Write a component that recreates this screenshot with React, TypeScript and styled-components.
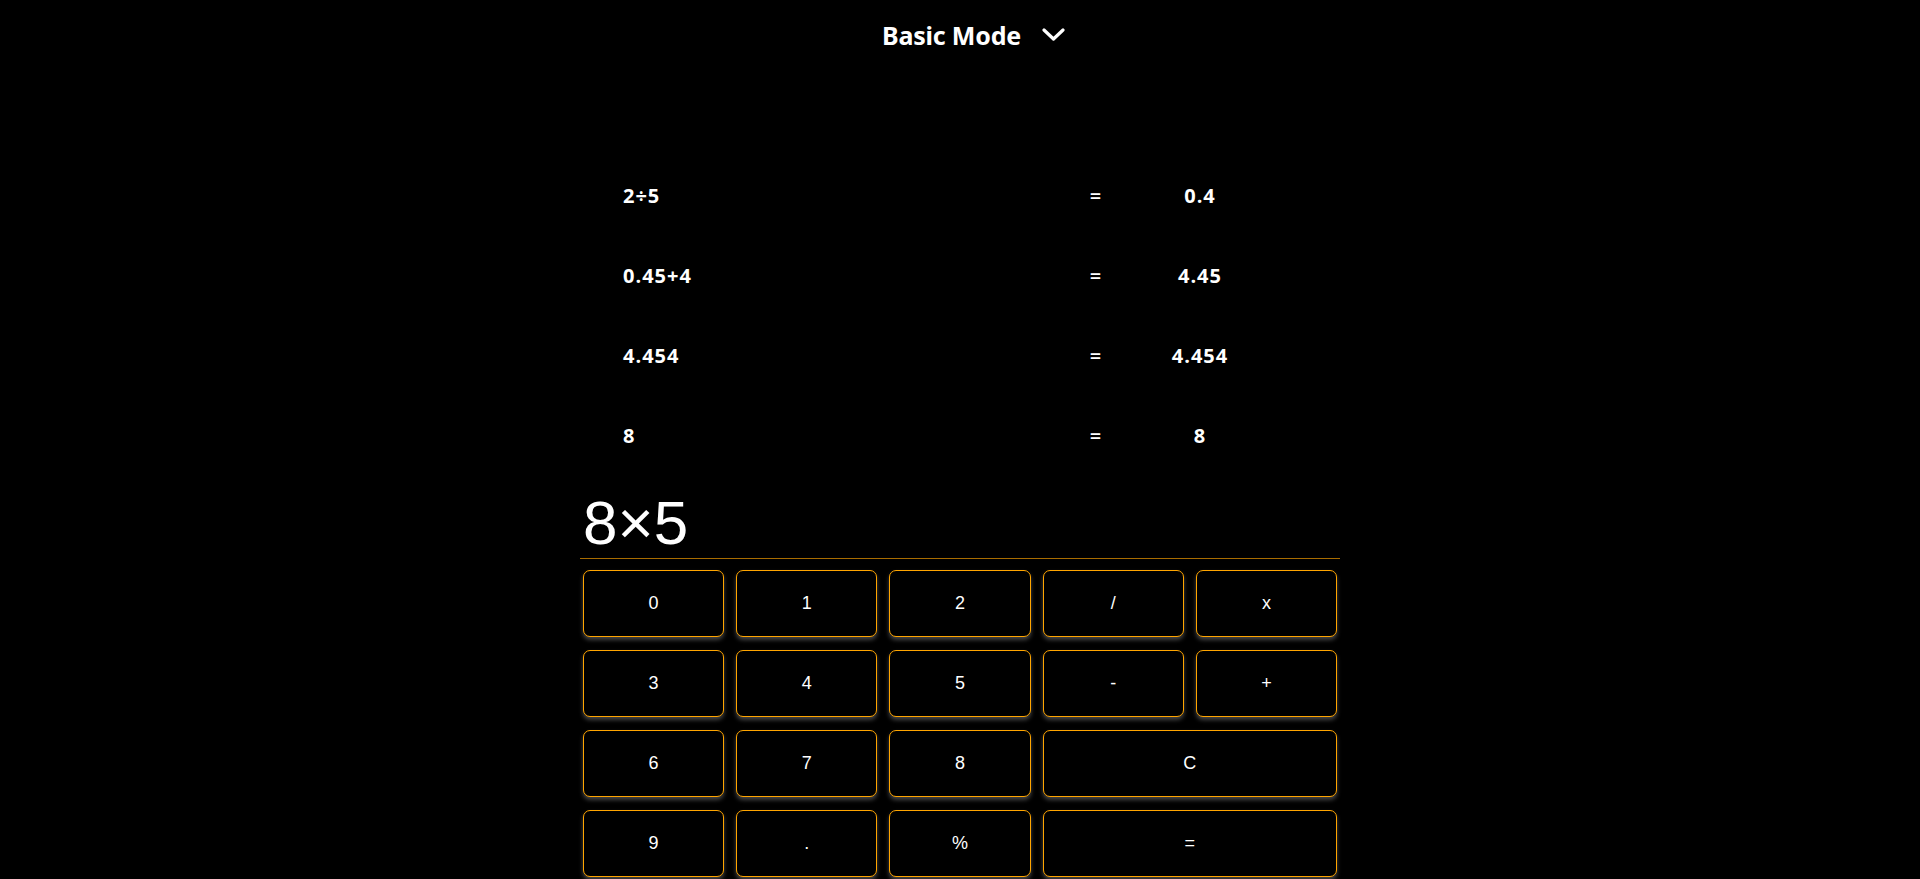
import React from "react";
import styled, { createGlobalStyle } from "styled-components";

const GlobalStyle = createGlobalStyle`
  html, body {
    margin: 0;
    padding: 0;
    background: #000;
    color: #fff;
  }
  body {
    font-family: "Liberation Sans", Arial, sans-serif;
  }
`;

const Page = styled.div`
  min-height: 879px;
  background: #000;
  display: flex;
  flex-direction: column;
  align-items: center;
`;

const Header = styled.header`
  height: 70px;
  width: 100%;
  display: flex;
  align-items: center;
  justify-content: center;
  gap: 21px;
  padding-left: 27px;
  box-sizing: border-box;
`;

const ModeTitle = styled.h1`
  margin: 0;
  font-family: "Noto Sans", sans-serif;
  font-weight: 700;
  font-size: 25px;
  letter-spacing: -0.2px;
  color: #fff;
`;

const Chevron = styled.svg`
  width: 23px;
  height: 14px;
  display: block;
`;

const Calculator = styled.main`
  width: 760px;
  margin-top: 85px;
  display: flex;
  flex-direction: column;
`;

const History = styled.div`
  display: flex;
  flex-direction: column;
`;

const HistoryRow = styled.div`
  height: 80px;
  display: grid;
  grid-template-columns: 1fr 68px 140px;
  align-items: center;
  padding: 0 70px 0 43px;
  font-family: "Open Sans", sans-serif;
  font-weight: 700;
  font-size: 20px;
  letter-spacing: 1px;
`;

const Expr = styled.span`
  text-align: left;
`;

const Eq = styled.span`
  text-align: center;
  font-weight: 600;
`;

const Result = styled.span`
  text-align: center;
`;

const Display = styled.div`
  height: 83px;
  display: flex;
  align-items: flex-end;
  padding: 0 3px;
  border-bottom: 1px solid #a86c00;
  font-family: "Liberation Sans", Arial, sans-serif;
  font-size: 62px;
  line-height: normal;
  color: #fff;
`;

const Keypad = styled.div`
  display: grid;
  grid-template-columns: repeat(5, 1fr);
  grid-auto-rows: 67px;
  column-gap: 12px;
  row-gap: 13px;
  padding: 11px 3px 0;
`;

const Key = styled.button<{ $wide?: boolean }>`
  grid-column: ${(p) => (p.$wide ? "span 2" : "span 1")};
  background: #000;
  color: #fff;
  border: 1px solid #ffa500;
  border-radius: 7px;
  box-shadow: 0 3px 4px rgba(170, 170, 170, 0.4);
  font-family: "Liberation Sans", Arial, sans-serif;
  font-size: 18px;
  cursor: pointer;
  padding: 0;
`;

const history = [
  { expr: "2÷5", result: "0.4" },
  { expr: "0.45+4", result: "4.45" },
  { expr: "4.454", result: "4.454" },
  { expr: "8", result: "8" },
];

const keys: { label: string; wide?: boolean }[] = [
  { label: "0" },
  { label: "1" },
  { label: "2" },
  { label: "/" },
  { label: "x" },
  { label: "3" },
  { label: "4" },
  { label: "5" },
  { label: "-" },
  { label: "+" },
  { label: "6" },
  { label: "7" },
  { label: "8" },
  { label: "C", wide: true },
  { label: "9" },
  { label: "." },
  { label: "%" },
  { label: "=", wide: true },
];

export default function App() {
  return (
    <>
      <GlobalStyle />
      <Page>
        <Header>
          <ModeTitle>Basic Mode</ModeTitle>
          <Chevron viewBox="0 0 23 14" fill="none">
            <polyline
              points="2,2 11.5,11 21,2"
              stroke="#fff"
              strokeWidth="3.2"
              strokeLinecap="round"
              strokeLinejoin="round"
            />
          </Chevron>
        </Header>
        <Calculator>
          <History>
            {history.map((h, i) => (
              <HistoryRow key={i}>
                <Expr>{h.expr}</Expr>
                <Eq>=</Eq>
                <Result>{h.result}</Result>
              </HistoryRow>
            ))}
          </History>
          <Display>8×5</Display>
          <Keypad>
            {keys.map((k) => (
              <Key key={k.label} $wide={k.wide}>
                {k.label}
              </Key>
            ))}
          </Keypad>
        </Calculator>
      </Page>
    </>
  );
}
